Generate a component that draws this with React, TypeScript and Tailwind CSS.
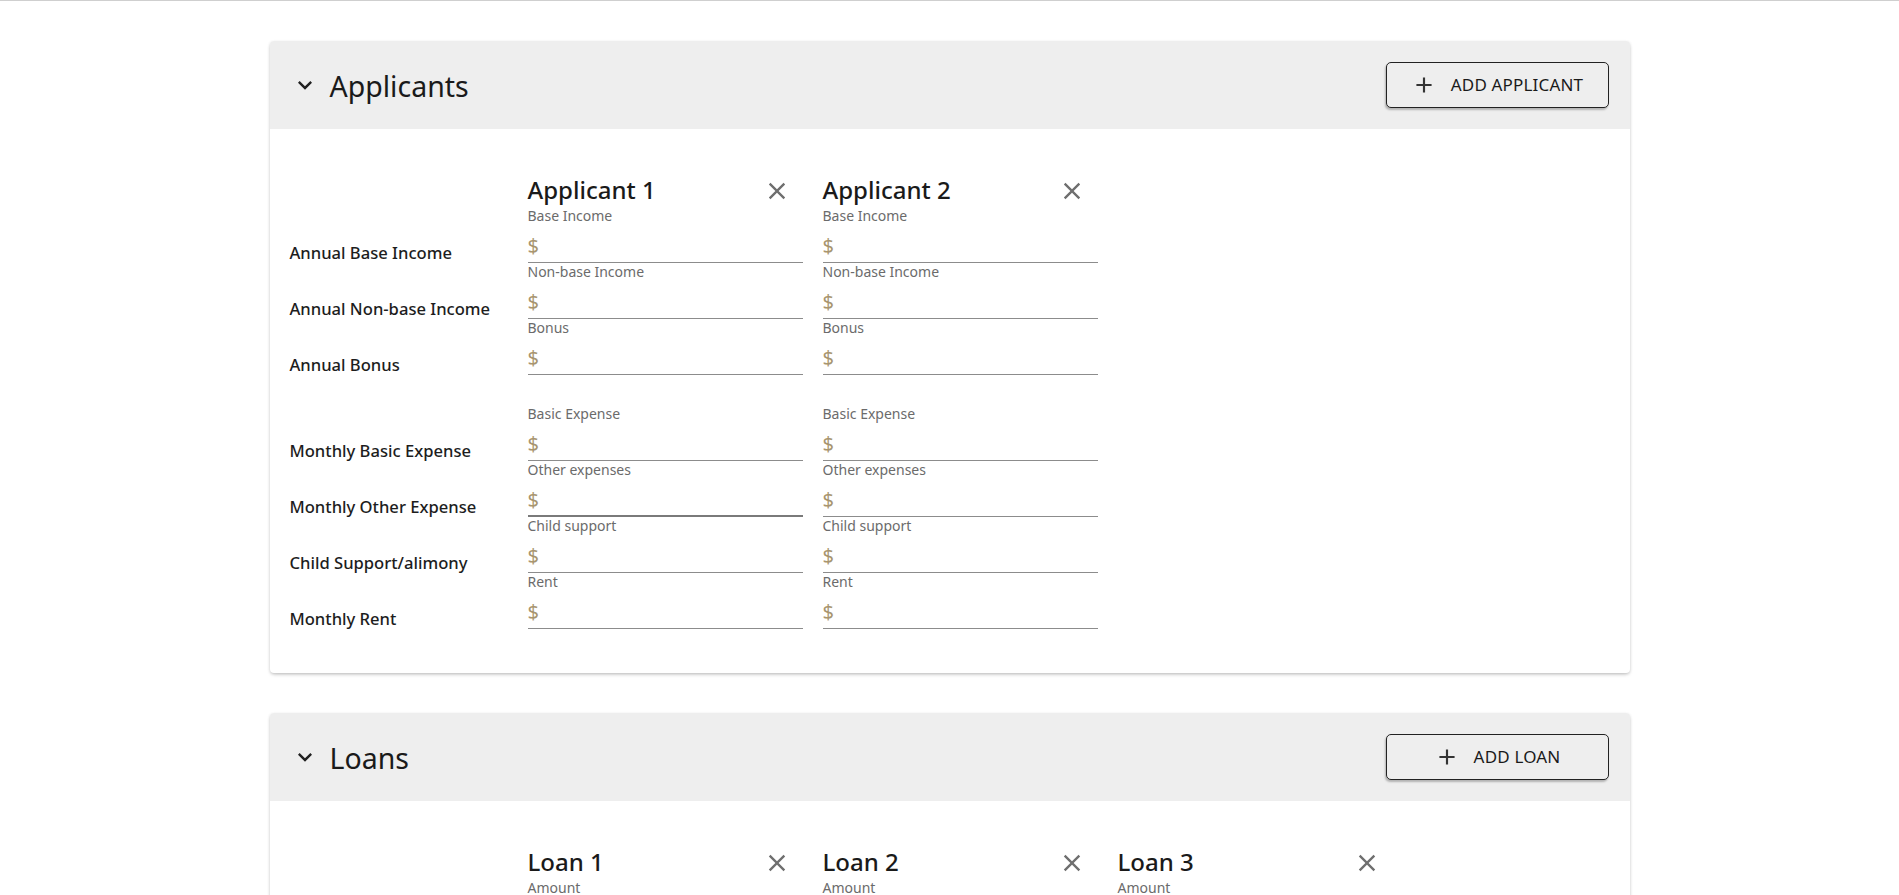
import React from 'react';

type Field = { label: string; left: string };

const incomeFields: Field[] = [
  { label: 'Base Income', left: 'Annual Base Income' },
  { label: 'Non-base Income', left: 'Annual Non-base Income' },
  { label: 'Bonus', left: 'Annual Bonus' },
];

const expenseFields: Field[] = [
  { label: 'Basic Expense', left: 'Monthly Basic Expense' },
  { label: 'Other expenses', left: 'Monthly Other Expense' },
  { label: 'Child support', left: 'Child Support/alimony' },
  { label: 'Rent', left: 'Monthly Rent' },
];

const loanFields: Field[] = [
  { label: 'Amount', left: 'Loan Amount' },
  { label: 'Interest rate', left: 'Interest Rate' },
  { label: 'Term', left: 'Loan Term' },
  { label: 'Payment', left: 'Monthly Payment' },
];

function ChevronDown() {
  return (
    <svg viewBox="0 0 24 24" className="w-7 h-7 fill-[#222]">
      <path d="M16.59 8.59L12 13.17 7.41 8.59 6 10l6 6 6-6z" />
    </svg>
  );
}

function PlusIcon() {
  return (
    <svg viewBox="0 0 24 24" className="w-[26px] h-[26px] fill-[#333]">
      <path d="M19 13h-6v6h-2v-6H5v-2h6V5h2v6h6v2z" />
    </svg>
  );
}

function CloseIcon() {
  return (
    <svg viewBox="0 0 24 24" className="w-7 h-7 fill-[#6f6f6f]">
      <path d="M19 6.41L17.59 5 12 10.59 6.41 5 5 6.41 10.59 12 5 17.59 6.41 19 12 13.41 17.59 19 19 17.59 13.41 12z" />
    </svg>
  );
}

function MoneyField({ label, active }: { label: string; active?: boolean }) {
  return (
    <div className="h-[56px] flex flex-col">
      <div className="h-[18px] text-[14px] leading-[18px] text-[#6b6b6b]">{label}</div>
      <div
        className={
          active
            ? 'flex-1 flex items-center border-b-2 border-[#7a7a7a]'
            : 'flex-1 flex items-center border-b border-[#8c8c8c]'
        }
      >
        <span className="text-[20px] leading-none text-[#a8956f] pt-[5px]">$</span>
      </div>
    </div>
  );
}

function LeftLabel({ text }: { text: string }) {
  return (
    <div className="h-[56px] pt-[34px]">
      <div className="text-[16.6px] leading-6 font-medium text-[#1d1d1d] whitespace-nowrap">{text}</div>
    </div>
  );
}

function Column({ title, groups, activeIdx }: { title: string; groups: Field[][]; activeIdx?: string }) {
  return (
    <div className="w-[275px]">
      <div className="h-[32px] flex items-center justify-between">
        <span className="text-[24px] font-medium text-[#1a1a1a] leading-8 -mt-[2px]">{title}</span>
        <span className="mr-[12px]">
          <CloseIcon />
        </span>
      </div>
      <div className="flex flex-col gap-[30px]">
        {groups.map((g, gi) => (
          <div key={gi}>
            {g.map((f, fi) => (
              <MoneyField key={f.label} label={f.label} active={activeIdx === `${gi}-${fi}`} />
            ))}
          </div>
        ))}
      </div>
    </div>
  );
}

function Section({
  title,
  button,
  columns,
  groups,
  activeIdx,
}: {
  title: string;
  button: string;
  columns: string[];
  groups: Field[][];
  activeIdx?: string;
}) {
  return (
    <div className="w-[1360px] mx-auto bg-white rounded-[4px] shadow-[0_2px_4px_-1px_rgba(0,0,0,0.2),0_1px_3px_0_rgba(0,0,0,0.12)] overflow-hidden">
      <div className="h-[88px] bg-[#eeeeee] flex items-center justify-between pl-[21px] pr-[21px]">
        <div className="flex items-center gap-[11px]">
          <ChevronDown />
          <span className="text-[28.5px] text-[#1a1a1a] leading-none pt-[3px]">{title}</span>
        </div>
        <button className="w-[223px] h-[46px] flex items-center justify-center gap-[14px] border border-[#222] rounded-[5px] bg-[#eeeeee] shadow-[-1px_2px_2px_rgba(0,0,0,0.25)] text-[17px] text-[#1a1a1a] tracking-[0.01em]">
          <PlusIcon />
          <span>{button}</span>
        </button>
      </div>
      <div className="flex pl-[20px] pt-[46px] pb-[44px]">
        <div className="w-[238px]">
          <div className="h-[32px]" />
          <div className="flex flex-col gap-[30px]">
            {groups.map((g, gi) => (
              <div key={gi}>
                {g.map((f) => (
                  <LeftLabel key={f.left} text={f.left} />
                ))}
              </div>
            ))}
          </div>
        </div>
        <div className="flex gap-[20px]">
          {columns.map((c) => (
            <Column key={c} title={c} groups={groups} activeIdx={c === columns[0] ? activeIdx : undefined} />
          ))}
        </div>
      </div>
    </div>
  );
}

export default function App() {
  return (
    <div className="min-h-screen bg-white font-['Noto_Sans',sans-serif]">
      <div className="h-px bg-[#cfcfcf]" />
      <div className="pt-10 pb-10 flex flex-col gap-10">
        <Section
          title="Applicants"
          button="ADD APPLICANT"
          columns={['Applicant 1', 'Applicant 2']}
          groups={[incomeFields, expenseFields]}
          activeIdx="1-1"
        />
        <Section
          title="Loans"
          button="ADD LOAN"
          columns={['Loan 1', 'Loan 2', 'Loan 3']}
          groups={[loanFields]}
        />
      </div>
    </div>
  );
}
